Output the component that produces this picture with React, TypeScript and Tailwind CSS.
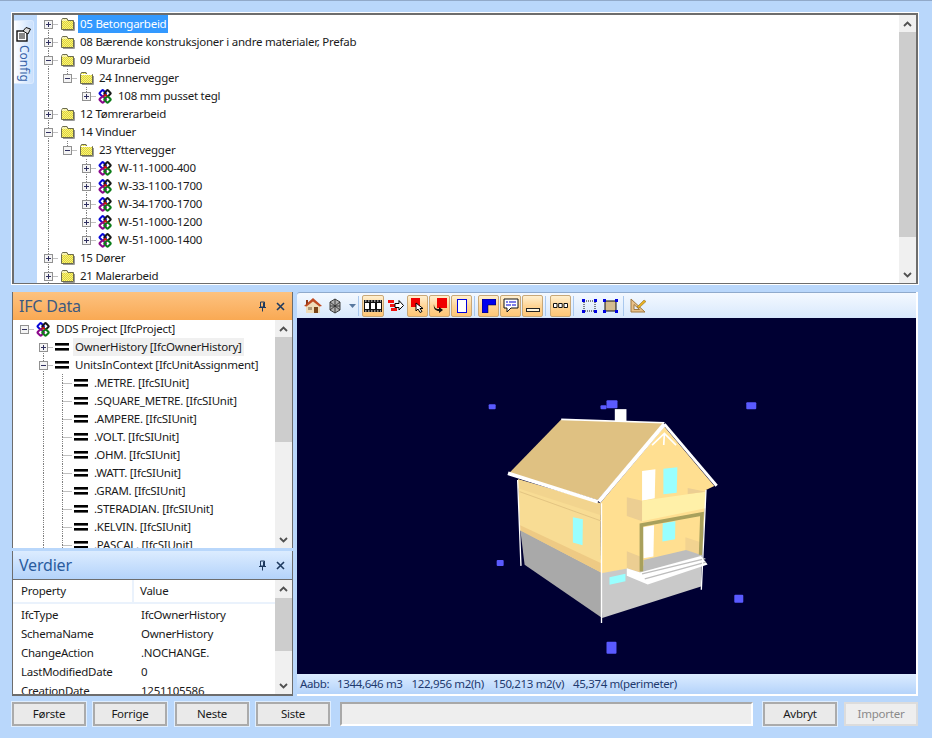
import React from 'react';

const FONT = '"Noto Sans", "Open Sans", sans-serif';

const Molecule = () => (
  <svg width="14" height="15" viewBox="0 0 14 15" className="shrink-0">
    <rect x="2.2" y="1.8" width="5" height="5" rx="1" transform="rotate(45 4.7 4.3)" fill="#fff" stroke="#0808d8" strokeWidth="2" />
    <rect x="7" y="1.8" width="5" height="5" rx="1" transform="rotate(45 9.5 4.3)" fill="none" stroke="#181818" strokeWidth="2" />
    <rect x="2.2" y="8" width="5" height="5" rx="1" transform="rotate(45 4.7 10.5)" fill="none" stroke="#8c0a8c" strokeWidth="2" />
    <rect x="7" y="8" width="5" height="5" rx="1" transform="rotate(45 9.5 10.5)" fill="none" stroke="#0c7c18" strokeWidth="2" />
    <path d="M5.5 7.4 L7.2 5.6 L8.9 7.4" fill="none" stroke="#d01010" strokeWidth="1.4" />
  </svg>
);

const Folder = ({ open }: { open?: boolean }) => (
  <svg width="15" height="14" viewBox="0 0 15 14" className="shrink-0">
    <defs>
      <pattern id="dither" width="2" height="2" patternUnits="userSpaceOnUse">
        <rect width="2" height="2" fill="#ffff66" />
        <rect width="1" height="1" fill="#d8c850" />
        <rect x="1" y="1" width="1" height="1" fill="#d8c850" />
      </pattern>
    </defs>
    <path d="M1.5 3.5 L2.5 1.5 H7 L8 3.5 H13.5 V12.5 H1.5 Z" fill="url(#dither)" stroke="#6b6b50" />
    <path d={open ? 'M2 3.5 H13' : 'M2 3 H7'} stroke="#ffffff" />
    <path d="M14.5 5 V13.5 H3" fill="none" stroke="#9a9a9a" />
  </svg>
);

const Bars = () => (
  <svg width="14" height="8" viewBox="0 0 14 8" className="shrink-0">
    <rect x="0" y="0" width="14" height="2.6" fill="#000" />
    <rect x="0" y="5" width="14" height="2.6" fill="#000" />
  </svg>
);

type Glyph = 'plus' | 'minus' | 'leaf';

// one indent column: dotted guide, optional +/- box and connector to the icon
const TreeCell = ({ glyph, up, down }: { glyph?: Glyph; up?: boolean; down?: boolean }) => (
  <svg width="19" height="18" viewBox="0 0 19 18" className="shrink-0">
    {up && <line x1="9.5" y1="0" x2="9.5" y2="9" stroke="#808080" strokeDasharray="1 1" />}
    {down && <line x1="9.5" y1="9" x2="9.5" y2="18" stroke="#808080" strokeDasharray="1 1" />}
    {glyph && <line x1="9.5" y1="9.5" x2="19" y2="9.5" stroke="#808080" strokeDasharray="1 1" />}
    {glyph && glyph !== 'leaf' && (
      <>
        <rect x="5.5" y="5.5" width="8" height="8" fill="#f4f4f4" stroke="#919191" />
        <line x1="7" y1="9.5" x2="12" y2="9.5" stroke="#303060" />
        {glyph === 'plus' && <line x1="9.5" y1="7" x2="9.5" y2="12" stroke="#303060" />}
      </>
    )}
  </svg>
);

interface Row {
  label: string;
  guides: boolean[];
  glyph: Glyph;
  up?: boolean;
  down?: boolean;
  icon: 'folder' | 'open' | 'mol' | 'bars';
  selected?: boolean;
  hover?: boolean;
}

const TreeRow = ({ row }: { row: Row }) => (
  <div className="flex h-[18px] shrink-0 items-center whitespace-nowrap">
    {row.guides.map((g, i) => (
      <TreeCell key={i} up={g} down={g} />
    ))}
    <TreeCell glyph={row.glyph} up={row.up} down={row.down} />
    <span className="ml-[2px] flex w-[15px] shrink-0 items-center">
      {row.icon === 'folder' && <Folder />}
      {row.icon === 'open' && <Folder open />}
      {row.icon === 'mol' && <Molecule />}
      {row.icon === 'bars' && <Bars />}
    </span>
    <span
      className={`ml-[3px] px-[2px] text-[11.5px] leading-[18px] tracking-[-0.25px] ${
        row.selected ? 'bg-[#3399ff] text-white' : row.hover ? 'bg-[#f0f0f0] text-[#1a1a1a]' : 'text-[#1a1a1a]'
      }`}
    >
      {row.label}
    </span>
  </div>
);

const Chevron = ({ down }: { down?: boolean }) => (
  <svg width="9" height="6" viewBox="0 0 9 6">
    <path d={down ? 'M1 1 L4.5 4.5 L8 1' : 'M1 5 L4.5 1.5 L8 5'} fill="none" stroke="#505050" strokeWidth="1.8" />
  </svg>
);

const ScrollBar = ({ thumbTop, thumbHeight }: { thumbTop: number; thumbHeight: number }) => (
  <div className="flex w-[17px] shrink-0 flex-col bg-[#f0f0f0]">
    <div className="flex h-[17px] shrink-0 items-center justify-center"><Chevron /></div>
    <div className="flex-1">
      <div className="bg-[#cdcdcd]" style={{ marginTop: thumbTop, height: thumbHeight }} />
    </div>
    <div className="flex h-[17px] shrink-0 items-center justify-center"><Chevron down /></div>
  </div>
);

const configRows: Row[] = [
  { label: '05 Betongarbeid', guides: [], glyph: 'plus', down: true, icon: 'folder', selected: true },
  { label: '08 Bærende konstruksjoner i andre materialer, Prefab', guides: [], glyph: 'plus', up: true, down: true, icon: 'folder' },
  { label: '09 Murarbeid', guides: [], glyph: 'minus', up: true, down: true, icon: 'folder' },
  { label: '24 Innervegger', guides: [true], glyph: 'minus', up: true, icon: 'open' },
  { label: '108 mm pusset tegl', guides: [true, false], glyph: 'plus', up: true, icon: 'mol' },
  { label: '12 Tømrerarbeid', guides: [], glyph: 'plus', up: true, down: true, icon: 'folder' },
  { label: '14 Vinduer', guides: [], glyph: 'minus', up: true, down: true, icon: 'folder' },
  { label: '23 Yttervegger', guides: [true], glyph: 'minus', up: true, icon: 'open' },
  { label: 'W-11-1000-400', guides: [true, false], glyph: 'plus', up: true, down: true, icon: 'mol' },
  { label: 'W-33-1100-1700', guides: [true, false], glyph: 'plus', up: true, down: true, icon: 'mol' },
  { label: 'W-34-1700-1700', guides: [true, false], glyph: 'plus', up: true, down: true, icon: 'mol' },
  { label: 'W-51-1000-1200', guides: [true, false], glyph: 'plus', up: true, down: true, icon: 'mol' },
  { label: 'W-51-1000-1400', guides: [true, false], glyph: 'plus', up: true, icon: 'mol' },
  { label: '15 Dører', guides: [], glyph: 'plus', up: true, down: true, icon: 'folder' },
  { label: '21 Malerarbeid', guides: [], glyph: 'plus', up: true, down: true, icon: 'folder' },
];

const units = ['.METRE.', '.SQUARE_METRE.', '.AMPERE.', '.VOLT.', '.OHM.', '.WATT.', '.GRAM.', '.STERADIAN.', '.KELVIN.', '.PASCAL.'];

const ifcRows: Row[] = [
  { label: 'DDS Project [IfcProject]', guides: [], glyph: 'minus', icon: 'mol' },
  { label: 'OwnerHistory [IfcOwnerHistory]', guides: [false], glyph: 'plus', down: true, icon: 'bars', hover: true },
  { label: 'UnitsInContext [IfcUnitAssignment]', guides: [false], glyph: 'minus', up: true, down: true, icon: 'bars' },
  ...units.map((u): Row => ({
    label: `${u} [IfcSIUnit]`,
    guides: [false, true],
    glyph: 'leaf',
    up: true,
    down: true,
    icon: 'bars',
  })),
];

const values = [
  ['IfcType', 'IfcOwnerHistory'],
  ['SchemaName', 'OwnerHistory'],
  ['ChangeAction', '.NOCHANGE.'],
  ['LastModifiedDate', '0'],
  ['CreationDate', '1251105586'],
];

const PanelHeader = ({ title, active }: { title: string; active?: boolean }) => (
  <div
    className={`flex h-[28px] shrink-0 items-center justify-between pl-[6px] pr-[7px] ${
      active ? 'bg-gradient-to-b from-[#fdc27f] to-[#f9a953]' : 'bg-gradient-to-b from-[#dcecff] to-[#b4d3fa]'
    }`}
  >
    <span className={`text-[16px] tracking-[-0.2px] ${active ? 'text-[#3d5a80]' : 'text-[#2a5c9e]'}`}>{title}</span>
    <div className="flex items-center gap-[9px]">
      <svg width="9" height="11" viewBox="0 0 9 11">
        <path d="M2.5 1 H6.5 V6 H2.5 Z M1 6.5 H8 M4.5 7 V10.5 M5.5 1.5 V6" fill="none" stroke="#1e3a5f" />
      </svg>
      <svg width="9" height="9" viewBox="0 0 9 9">
        <path d="M1 1 L8 8 M8 1 L1 8" stroke="#1e3a5f" strokeWidth="1.6" />
      </svg>
    </div>
  </div>
);

const ToolButton = ({ active, children, className = 'w-[21px]' }: { active?: boolean; children: React.ReactNode; className?: string }) => (
  <div
    className={`flex h-[22px] shrink-0 items-center justify-center ${
      active ? 'rounded-[2px] border border-[#c8a878] bg-gradient-to-b from-[#fff0d0] via-[#ffd596] to-[#ffc676]' : ''
    } ${className}`}
  >
    {children}
  </div>
);

const Sep = () => <div className="ml-[2px] mr-[3px] h-[20px] w-[1px] shrink-0 bg-[#a9c8ee]" />;

const Toolbar = () => (
  <div className="flex h-[26px] shrink-0 items-center rounded-tl-[3px] border-t border-t-[#8faacc] bg-gradient-to-b from-[#f4f9ff] to-[#d8e8fc] pl-[5px]">
    <ToolButton>
      <svg width="20" height="19" viewBox="0 0 20 19">
        <path d="M3 10 L3 17 H17 V10 L10 5 Z" fill="#efdcb8" />
        <path d="M1 10 L10 2 L19 10 L16.5 10.5 L10 5.5 L3.5 10.5 Z" fill="#c04a20" />
        <path d="M3 4 H5 V7 L3 9 Z" fill="#903818" />
        <rect x="11" y="11" width="4" height="6" fill="#7a4518" />
        <rect x="5" y="11" width="4" height="3" fill="#b09878" />
      </svg>
    </ToolButton>
    <ToolButton className="ml-[5px] w-[13px]">
      <svg width="12" height="16" viewBox="0 0 12 16">
        <path d="M6 1 L11 4 V12 L6 15 L1 12 V4 Z M1 4 L11 12 M11 4 L1 12 M6 1 V15 M1 8 H11" fill="#b0b0b0" stroke="#303030" strokeWidth="0.9" />
      </svg>
    </ToolButton>
    <svg width="7" height="4" viewBox="0 0 7 4" className="ml-[8px] shrink-0">
      <path d="M0 0 H7 L3.5 4 Z" fill="#5878a0" />
    </svg>
    <Sep />
    <ToolButton active className="w-[22px]">
      <svg width="18" height="12" viewBox="0 0 18 12">
        <rect width="18" height="12" fill="#111" />
        <rect x="1" y="3" width="4" height="6" fill="#fff" />
        <rect x="7" y="3" width="4" height="6" fill="#fff" />
        <rect x="13" y="3" width="4" height="6" fill="#fff" />
        <path d="M1 1 H17 M1 11 H17" stroke="#fff" strokeDasharray="1.5 1.5" />
      </svg>
    </ToolButton>
    <ToolButton className="ml-[4px] mr-[3px] w-[16px]">
      <svg width="16" height="14" viewBox="0 0 16 14">
        <rect x="0" y="1" width="6" height="3" fill="#f01010" />
        <rect x="2" y="5" width="5" height="3" fill="#f01010" />
        <rect x="3" y="9" width="6" height="3" fill="#f01010" />
        <path d="M7 4.5 H11 V1.5 L15.5 6.5 L11 11 V8.5 H7 Z" fill="#fff" stroke="#000" />
      </svg>
    </ToolButton>
    <div className="flex gap-[1px]">
      <ToolButton active>
        <svg width="14" height="15" viewBox="0 0 14 15">
          <rect x="0" y="0" width="9" height="9" fill="#f00000" />
          <path d="M5 5 V13 L7 11 L9 14.5 L11 13.5 L9 10.5 H12 Z" fill="#fff" stroke="#000" />
        </svg>
      </ToolButton>
      <ToolButton active>
        <svg width="14" height="15" viewBox="0 0 14 15">
          <rect x="4" y="0" width="10" height="10" fill="#f00000" />
          <path d="M1 6 C1 10 3 11 6 11 V9 L10 12 L6 15 V13 C3 13 0 11 1 6 Z" fill="#111" />
        </svg>
      </ToolButton>
      <ToolButton active>
        <div className="h-[14px] w-[10px] border-[1.5px] border-[#0000e0] bg-white" />
      </ToolButton>
    </div>
    <Sep />
    <div className="flex gap-[1px]">
      <ToolButton active>
        <svg width="14" height="14" viewBox="0 0 14 14">
          <path d="M0 0 H14 V6 H6 V14 H0 Z" fill="#0000ee" stroke="#000" strokeWidth="0.5" />
        </svg>
      </ToolButton>
      <ToolButton active>
        <svg width="16" height="15" viewBox="0 0 16 15">
          <path d="M1 1 H15 V10 H8 L4 14 V10 H1 Z" fill="#fff" stroke="#111" />
          <path d="M3 4 H5 M6 4 H13 M3 7 H8 M9 7 H13" stroke="#0000d0" strokeWidth="1.2" />
        </svg>
      </ToolButton>
      <ToolButton active>
        <div className="mt-[8px] h-[4px] w-[14px] border border-[#222] bg-[#fff6e0]" />
      </ToolButton>
    </div>
    <Sep />
    <ToolButton active className="ml-[1px] w-[21px]">
      <svg width="15" height="5" viewBox="0 0 15 5">
        <path d="M0.5 0.5 H4 V4.5 H0.5 Z M5.7 0.5 H9.2 V4.5 H5.7 Z M11 0.5 H14.5 V4.5 H11 Z" fill="#fff" stroke="#111" />
      </svg>
    </ToolButton>
    <Sep />
    <ToolButton className="ml-[2px] w-[21px]">
      <svg width="15" height="14" viewBox="0 0 15 14">
        <rect x="2" y="2" width="11" height="10" fill="none" stroke="#111" strokeDasharray="1 1" />
        <path d="M0 0 H3 V3 H0 Z M12 0 H15 V3 H12 Z M0 11 H3 V14 H0 Z M12 11 H15 V14 H12 Z" fill="#0000e0" />
      </svg>
    </ToolButton>
    <ToolButton>
      <svg width="15" height="14" viewBox="0 0 15 14">
        <rect x="2" y="2" width="11" height="10" fill="#d4bc90" stroke="#111" />
        <path d="M0 0 H3 V3 H0 Z M12 0 H15 V3 H12 Z M0 11 H3 V14 H0 Z M12 11 H15 V14 H12 Z" fill="#0000e0" />
      </svg>
    </ToolButton>
    <Sep />
    <ToolButton className="ml-[1px] w-[21px]">
      <svg width="17" height="15" viewBox="0 0 17 15">
        <path d="M1 1 L1 14 H15 Z M4 6.5 V11.5 H9.5 Z" fill="#e8c088" fillRule="evenodd" stroke="#a07840" />
        <path d="M7 9 L14 2 L16 3.5 L9 10 Z" fill="#e8b020" stroke="#806020" strokeWidth="0.5" />
      </svg>
    </ToolButton>
  </div>
);

const markers = [
  [489, 404, 7, 5],
  [747, 402, 10, 7],
  [497, 560, 7, 6],
  [735, 595, 9, 8],
  [607, 642, 10, 12],
  [607, 400, 11, 8],
  [601, 405, 6, 4],
];

// the 3D model: coordinates are in 3x zoom space around the house
const House = () => (
  <svg viewBox="297 318 620 356" className="h-full w-full">
    {markers.map(([x, y, w, h], i) => (
      <rect key={i} x={x} y={y} width={w} height={h} rx="1" fill="#5a5aff" />
    ))}
    <g transform="translate(480 390) scale(0.3333)">
      <rect x="406" y="57" width="35" height="40" fill="#fff" />
      <path d="M122 420 L365 545 L368 685 L135 525 Z" fill="#a9a9a9" />
      <path d="M365 548 L668 492 L665 590 L368 685 Z" fill="#c9c9c9" />
      <path d="M115 268 L362 340 L365 548 L120 420 Z" fill="#f8dc94" />
      <path d="M115 268 L362 340 L362 375 L115 295 Z" fill="#f2d48e" />
      <path d="M120 405 L365 520 L365 548 L120 420 Z" fill="#eeca84" />
      <path d="M120 305 L362 392 L442 378" fill="none" stroke="#d8b878" strokeWidth="2" />
      <path d="M362 340 L555 110 L705 288 L680 300 L668 495 L365 550 Z" fill="#ffdf91" />
      <path d="M245 88 L555 98 L355 330 L88 250 Z" fill="#dfc182" />
      <path d="M280 382 L310 388 L309 466 L280 458 Z" fill="#99ffff" />
      <path d="M390 562 L438 552 L438 574 L390 585 Z" fill="#99ffff" />
      <path d="M488 243 L528 238 L526 325 L488 332 Z" fill="#fff" />
      <path d="M552 236 L594 232 L592 308 L552 313 Z" fill="#99ffff" />
      <path d="M442 322 L488 332 L488 394 L442 378 Z" fill="#ecce92" />
      <path d="M488 332 L678 305 L678 355 L488 394 Z" fill="#fff0a8" />
      <path d="M625 294 L680 305 L625 312 Z" fill="#ecce92" />
      <path d="M490 412 L524 406 L522 500 L492 505 Z" fill="#fff" />
      <path d="M550 400 L588 394 L587 448 L549 455 Z" fill="#99ffff" />
      <path d="M442 484 L482 500 L482 548 L442 535 Z" fill="#ecce92" />
      <path d="M618 442 L662 456 L660 496 L618 480 Z" fill="#f2d390" />
      <path d="M492 510 L620 480 L668 496 L492 545 Z" fill="#bdbdbd" />
      <path d="M486 545 L486 405 L668 372 L664 495" fill="none" stroke="#a8a05c" strokeWidth="11" />
      <path d="M442 535 L482 548 L665 498 L685 524 L505 584 L442 558 Z" fill="#fff" />
      <path d="M488 552 L678 506 M496 567 L680 517" stroke="#bdbdbd" strokeWidth="4" />
      <path d="M85 250 L355 335" stroke="#fff" strokeWidth="11" />
      <path d="M245 88 L555 98" stroke="#fff" strokeWidth="5" />
      <path d="M358 335 L555 102" stroke="#fff" strokeWidth="12" />
      <path d="M555 102 L712 287" stroke="#fff" strokeWidth="9" />
      <path d="M518 165 L555 130 L590 165 M555 130 L553 165" fill="none" stroke="#fff" strokeWidth="5" />
      <path d="M114 270 L124 528 M366 340 L366 700 M680 300 L666 600" fill="none" stroke="#fff" strokeWidth="4" />
    </g>
  </svg>
);

const Btn = ({ label, disabled, className }: { label: string; disabled?: boolean; className?: string }) => (
  <button
    className={`flex h-[24px] w-[74px] shrink-0 items-center justify-center border-2 text-[11.5px] tracking-[-0.25px] ${
      disabled
        ? 'border-[#dcdcdc] bg-[#eeeeee] text-[#8a8a8a]'
        : 'border-[#ababab] bg-[#eaeaea] text-[#1a1a1a] outline outline-1 outline-[#dfeeff]'
    } ${className ?? ''}`}
  >
    {label}
  </button>
);

export default function App() {
  return (
    <div
      className="flex h-[738px] w-[932px] flex-col overflow-hidden border-t border-t-[#91a9c9] bg-[#b9d7fb] pb-[12px] pl-[12px] pr-[14px] pt-[12px]"
      style={{ fontFamily: FONT }}
    >
      {/* config tree */}
      <div className="flex h-[271px] shrink-0 overflow-hidden border-b border-l-2 border-r-2 border-t-2 border-[#6d6d6d] bg-[#bdd9fb] outline outline-1 outline-white">
        <div className="w-[23px] shrink-0 pt-[5px]">
          <div className="flex h-[64px] w-[20px] flex-col items-center rounded-r-[3px] border border-l-0 border-[#dbeafd] bg-gradient-to-r from-[#ffffff] to-[#c9e0fd] pt-[6px]">
            <svg width="15" height="15" viewBox="0 0 15 15" className="shrink-0">
              <rect x="1" y="4" width="10" height="10" fill="#fff" stroke="#111" strokeWidth="1.4" />
              <path d="M3 7 H9 M3 9 H9 M3 11 H9" stroke="#111" />
              <path d="M7 4 L10 0.5 L14.5 2 L12 7 Z" fill="#dcdcdc" stroke="#111" />
            </svg>
            <span className="mt-[3px] text-[12px] leading-[14px] text-[#3560a8] [writing-mode:vertical-rl]">Config</span>
          </div>
        </div>
        <div className="flex min-w-0 flex-1 bg-white">
          <div className="min-w-0 flex-1 overflow-hidden pl-[2px]">
            {configRows.map((r, i) => <TreeRow key={i} row={r} />)}
          </div>
          <ScrollBar thumbTop={0} thumbHeight={205} />
        </div>
      </div>

      {/* lower area */}
      <div className="mt-[8px] flex h-[404px] shrink-0 gap-[4px]">
        <div className="flex w-[281px] shrink-0 flex-col gap-[3px]">
          <div className="flex h-[256px] shrink-0 flex-col overflow-hidden border-x border-x-[#6d6d6d]">
            <PanelHeader title="IFC Data" active />
            <div className="flex min-h-0 flex-1 bg-white">
              <div className="min-w-0 flex-1 overflow-hidden pl-[2px]">
                {ifcRows.map((r, i) => <TreeRow key={i} row={r} />)}
              </div>
              <ScrollBar thumbTop={0} thumbHeight={105} />
            </div>
          </div>
          <div className="flex min-h-0 flex-1 flex-col overflow-hidden border-x border-b-2 border-x-[#6d6d6d] border-b-[#6d6d6d]">
            <PanelHeader title="Verdier" />
            <div className="flex min-h-0 flex-1 border-t border-t-[#6d6d6d] bg-white">
              <div className="min-w-0 flex-1 overflow-hidden text-[11.5px] tracking-[-0.25px] text-[#1a1a1a]">
                <div className="flex h-[24px] items-center border-b-2 border-b-[#eaf2fc]">
                  <span className="w-[121px] border-r-2 border-r-[#eaf2fc] pl-[8px] leading-[24px]">Property</span>
                  <span className="pl-[6px]">Value</span>
                </div>
                <div className="pt-[1px]">
                  {values.map(([k, v]) => (
                    <div key={k} className="flex h-[19px] items-center">
                      <span className="w-[121px] pl-[8px]">{k}</span>
                      <span className="pl-[7px]">{v}</span>
                    </div>
                  ))}
                </div>
              </div>
              <ScrollBar thumbTop={1} thumbHeight={53} />
            </div>
          </div>
        </div>

        <div className="flex min-w-0 flex-1 flex-col border-b-2 border-r-2 border-b-white border-r-white">
          <Toolbar />
          <div className="min-h-0 flex-1 bg-[#000033]">
            <House />
          </div>
          <div className="flex h-[20px] shrink-0 items-center gap-[9px] whitespace-pre bg-gradient-to-b from-[#dcecff] to-[#b4d3fa] pl-[3px] text-[11.5px] tracking-[-0.35px] text-[#1e3a6f]">
            <span className="w-[28px]">Aabb:</span>
            <span>1344,646 m3</span>
            <span>122,956 m2(h)</span>
            <span>150,213 m2(v)</span>
            <span>45,374 m(perimeter)</span>
          </div>
        </div>
      </div>

      {/* button row */}
      <div className="mt-[6px] flex h-[24px] shrink-0 items-center">
        <Btn label="Første" />
        <Btn label="Forrige" className="ml-[7px]" />
        <Btn label="Neste" className="ml-[8px]" />
        <Btn label="Siste" className="ml-[7px]" />
        <div className="ml-[10px] h-[24px] min-w-0 flex-1 border-2 border-[#a8a8a8] border-b-white border-r-white bg-[#eeeeee]" />
        <Btn label="Avbryt" className="ml-[10px]" />
        <Btn label="Importer" disabled className="ml-[7px]" />
      </div>
    </div>
  );
}
